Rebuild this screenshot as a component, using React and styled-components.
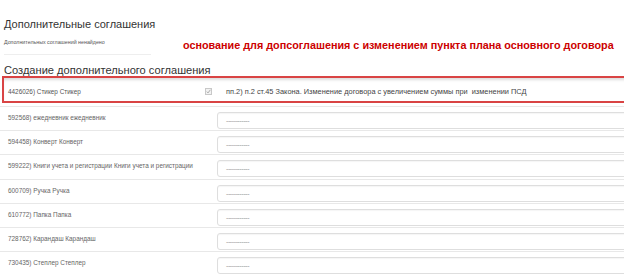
import React from 'react';
import styled, { createGlobalStyle } from 'styled-components';

const GlobalStyle = createGlobalStyle`
  html, body {
    margin: 0;
    padding: 0;
    background: #ffffff;
    overflow: hidden;
  }
  body {
    font-family: "Liberation Sans", Arial, sans-serif;
  }
`;

const Page = styled.div`
  width: 624px;
  height: 274px;
  overflow: hidden;
  background: #fff;
`;

const Top = styled.div`
  display: flex;
  padding: 16px 0 0 4px;
`;

const Summary = styled.div`
  width: 147px;
  padding-bottom: 8px;
  border-bottom: 1px solid #eeeeee;
`;

const Title = styled.div`
  font-size: 11px;
  line-height: 16px;
  color: #333;
  white-space: nowrap;
`;

const Empty = styled.div`
  margin-top: 6px;
  font-size: 5.3px;
  line-height: 8px;
  color: #555;
  white-space: nowrap;
`;

const Note = styled.div`
  margin: 23px 0 0 32px;
  font-size: 10.8px;
  line-height: 13px;
  font-weight: bold;
  color: #cc0000;
  white-space: nowrap;
`;

const SectionTitle = styled(Title)`
  margin: 9px 0 0 4px;
  line-height: 12px;
  font-size: 11.1px;
`;

const Form = styled.div`
  width: 660px;
`;

const Selected = styled.div`
  display: flex;
  align-items: center;
  height: 23px;
  margin-left: 2px;
  border: 2px solid #d94444;
  border-right: none;
  box-shadow: inset 0 3px 3px -1px #dddddd;
  font-size: 7px;
  color: #444;
`;

const SelectedLabel = styled.div`
  width: 197px;
  padding-left: 4px;
  padding-top: 3px;
  font-size: 6.4px;
  color: #555;
  white-space: nowrap;
`;

const Check = styled.svg`
  width: 7px;
  height: 7px;
  margin-top: 3px;
  flex-shrink: 0;
`;

const Reason = styled.div`
  margin-left: 14px;
  padding-top: 3px;
  white-space: pre;
  font-size: 7.4px;
`;

const Rows = styled.div`
  margin-top: 3px;
`;

const Row = styled.div`
  display: flex;
  align-items: flex-start;
  box-sizing: border-box;
  height: 24.2px;
  border-top: 1px solid #e8e8e8;
`;

const Label = styled.div`
  width: 209px;
  padding: 6px 0 0 8px;
  font-size: 6.4px;
  line-height: 9px;
  color: #666;
  white-space: nowrap;
`;

const Field = styled.div`
  flex: 1;
  box-sizing: border-box;
  height: 17px;
  margin-top: 5px;
  padding-left: 8px;
  display: flex;
  align-items: center;
  border: 1px solid #dedede;
  border-radius: 3px;
  box-shadow: inset 0 1px 1px rgba(0, 0, 0, 0.04);
  font-size: 7px;
  letter-spacing: -0.4px;
  color: #999;
`;

const items = [
  '592568) ежедневник ежедневник',
  '594458) Конверт Конверт',
  '599222) Книги учета и регистрации Книги учета и регистрации',
  '600709) Ручка Ручка',
  '610772) Папка Папка',
  '728762) Карандаш Карандаш',
  '730435) Степлер Степлер',
];

const App = () => (
  <Page>
    <GlobalStyle />
    <Top>
      <Summary>
        <Title>Дополнительные соглашения</Title>
        <Empty>Дополнительных соглашений ненайдено</Empty>
      </Summary>
      <Note>основание для допсоглашения с изменением пункта плана основного договора</Note>
    </Top>
    <SectionTitle>Создание дополнительного соглашения</SectionTitle>
    <Form>
      <Selected>
        <SelectedLabel>4426026) Стикер Стикер</SelectedLabel>
        <Check viewBox="0 0 7 7">
          <rect x="0.5" y="0.5" width="6" height="6" fill="#f2f2f2" stroke="#c8c8c8" />
          <path d="M1.8 3.6 L3 4.9 L5.4 1.8" fill="none" stroke="#999" strokeWidth="0.8" />
        </Check>
        <Reason>пп.2) п.2 ст.45 Закона. Изменение договора с увеличением суммы при  изменении ПСД</Reason>
      </Selected>
      <Rows>
        {items.map((item) => (
          <Row key={item}>
            <Label>{item}</Label>
            <Field>------------</Field>
          </Row>
        ))}
      </Rows>
    </Form>
  </Page>
);

export default App;
